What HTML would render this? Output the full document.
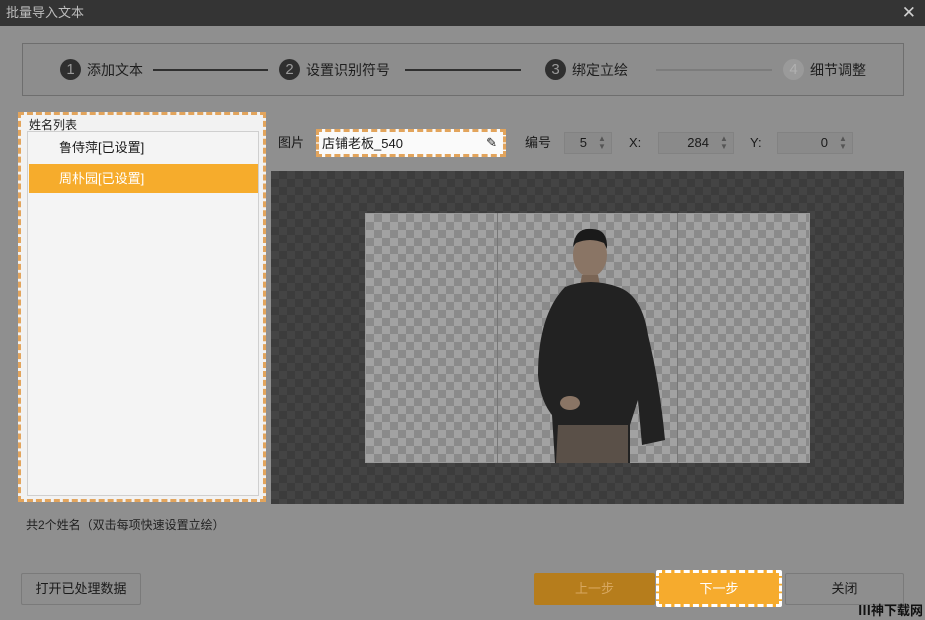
<!DOCTYPE html>
<html><head><meta charset="utf-8"><style>
*{margin:0;padding:0;box-sizing:border-box}
body{width:925px;height:620px;overflow:hidden;background:#8f8f8f;font-family:"Liberation Sans","Noto Sans CJK SC",sans-serif;font-size:13px;line-height:16px;color:#1a1a1a;position:relative}
.a{position:absolute}
.title{left:0;top:0;width:925px;height:26px;background:#343434;color:#bdbdbd;font-size:13px;line-height:26px;padding-left:6px}
.steps{left:22px;top:43px;width:882px;height:53px;border:1px solid #6e6e6e;background:#8d8d8d}
.num{width:21px;height:21px;border-radius:50%;background:#2f2f2f;color:#9a9a9a;font-size:15px;text-align:center;line-height:21px}
.st{font-size:14px;color:#1e1e1e;line-height:20px}
.line{height:2px;background:#2f2f2f}
.btn{height:32px;border:1px solid #7a7a7a;border-radius:2px;background:#8e8e8e;text-align:center;line-height:30px;font-size:13px}
.fld{height:22px;background:#8a8a8a;border:1px solid #828282;text-align:right;padding-right:24px;line-height:20px}
.arr{font-size:8px;line-height:8px;color:#555;text-align:center;width:10px}
</style></head><body>
<div class="a title">批量导入文本</div>
<div class="a" style="right:9px;top:3px;color:#cfcfcf;font-size:17px;line-height:20px">✕</div>
<div class="a steps"></div>
<div class="a num" style="left:60px;top:59px">1</div><div class="a st" style="left:87px;top:60px">添加文本</div>
<div class="a line" style="left:153px;top:69px;width:115px"></div>
<div class="a num" style="left:279px;top:59px">2</div><div class="a st" style="left:306px;top:60px">设置识别符号</div>
<div class="a line" style="left:405px;top:69px;width:116px"></div>
<div class="a num" style="left:545px;top:59px">3</div><div class="a st" style="left:572px;top:60px">绑定立绘</div>
<div class="a line" style="left:656px;top:69px;width:116px;background:#7c7c7c"></div>
<div class="a num" style="left:783px;top:59px;background:#9a9a9a;color:#b0b0b0">4</div><div class="a st" style="left:810px;top:60px">细节调整</div>

<div class="a" style="left:18px;top:112px;width:248px;height:390px;border:3px dashed #e2a45c;background:#f2f2f2"></div>
<div class="a" style="left:29px;top:117px;font-size:12px;color:#222">姓名列表</div>
<div class="a" style="left:27px;top:131px;width:232px;height:365px;border:1px solid #cfcfcf;background:#f4f4f4"></div>
<div class="a" style="left:59px;top:140px;font-size:13px">鲁侍萍[已设置]</div>
<div class="a" style="left:29px;top:164px;width:229px;height:29px;background:#f6ac2c;color:#fff;padding-left:30px;line-height:29px">周朴园[已设置]</div>

<div class="a" style="left:278px;top:135px">图片</div>
<div class="a" style="left:316px;top:129px;width:190px;height:28px;border:3px dashed #e2a45c;background:#fafafa;padding:4px 0 0 3px;font-size:13px">店铺老板_540<span style="position:absolute;right:6px;top:3px">✎</span></div>
<div class="a" style="left:525px;top:135px">编号</div>
<div class="a fld" style="left:564px;top:132px;width:48px">5</div>
<div class="a arr" style="left:597px;top:135px">▲<br>▼</div>
<div class="a" style="left:629px;top:135px">X:</div>
<div class="a fld" style="left:658px;top:132px;width:76px">284</div>
<div class="a arr" style="left:719px;top:135px">▲<br>▼</div>
<div class="a" style="left:750px;top:135px">Y:</div>
<div class="a fld" style="left:777px;top:132px;width:76px">0</div>
<div class="a arr" style="left:838px;top:135px">▲<br>▼</div>

<div class="a" style="left:271px;top:171px;width:633px;height:333px;background:repeating-conic-gradient(#3c3c3c 0 25%,#444 0 50%) 0 0/16px 16px"></div>
<div class="a" style="left:365px;top:213px;width:445px;height:250px;background:repeating-conic-gradient(#8a8a8a 0 25%,#a2a2a2 0 50%) 0 0/16px 16px;border:1px solid #999"></div>
<div class="a" style="left:497px;top:213px;width:1px;height:250px;background:#777"></div>
<div class="a" style="left:677px;top:213px;width:1px;height:250px;background:#777"></div>
<svg class="a" style="left:530px;top:225px" width="140" height="238" viewBox="0 0 140 238">
<ellipse cx="60" cy="30" rx="17" ry="22" fill="#8a7565"/>
<path d="M43 22 Q45 2 62 4 Q78 4 77 24 L74 18 Q60 12 46 18 Z" fill="#1a1a1a"/>
<path d="M52 50 L68 50 L70 60 L50 60 Z" fill="#7a6555"/>
<path d="M35 62 Q60 52 88 62 Q112 70 118 110 Q130 160 135 215 L112 220 L108 175 L100 200 L100 238 L25 238 L22 190 Q10 175 8 150 Q8 90 35 62 Z" fill="#222"/>
<path d="M28 200 L98 200 L98 238 L26 238 Z" fill="#5a5048"/>
<ellipse cx="40" cy="178" rx="10" ry="7" fill="#8a7565"/>
</svg>

<div class="a" style="left:26px;top:517px;font-size:12px;color:#222">共2个姓名（双击每项快速设置立绘）</div>
<div class="a btn" style="left:21px;top:573px;width:120px">打开已处理数据</div>
<div class="a btn" style="left:534px;top:573px;width:121px;background:#b67d1c;border-color:#b67d1c;color:#d8a860">上一步</div>
<div class="a btn" style="left:656px;top:570px;width:126px;height:37px;background:#f6ab2d;border:3px dashed #fff;color:#fff;line-height:31px">下一步</div>
<div class="a btn" style="left:785px;top:573px;width:119px">关闭</div>
<div class="a" style="left:858px;top:603px;font-size:13px;color:#111;font-weight:bold">Ⅲ神下载网</div>
</body></html>
